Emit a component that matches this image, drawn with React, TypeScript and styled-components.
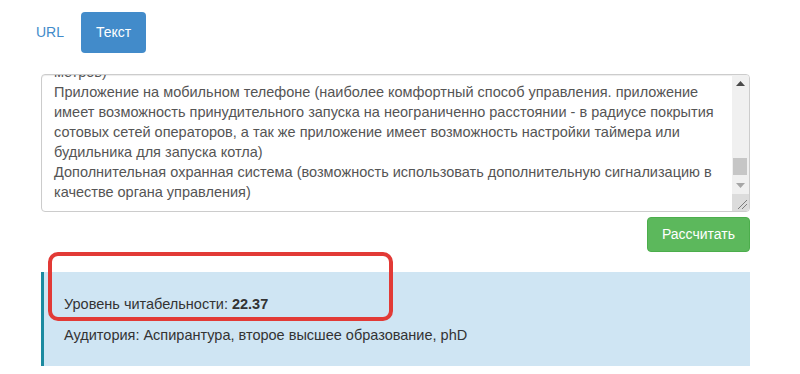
import { useEffect, useRef } from "react";
import styled, { createGlobalStyle } from "styled-components";

const GlobalStyle = createGlobalStyle`
  html, body {
    margin: 0;
    padding: 0;
    background: #fff;
  }
  body {
    font-family: "Liberation Sans", Arial, sans-serif;
    color: #333;
  }
`;

const lines = [
  "Котел твердотопливный с автоматическим управлением.",
  "Основные характеристики:",
  "Мощность котла - 25 кВт",
  "Площадь отапливаемого помещения - до 250 кв. метров",
  "Объем бункера для топлива - 150 литров",
  "Время работы на одной загрузке - до 5 суток",
  "Коэффициент полезного действия - 91%",
  "Вид топлива - пеллеты, уголь, дрова",
  "Рабочее давление теплоносителя - до 2,5 бар",
  "Максимальная температура теплоносителя - 90 градусов",
  "Габаритные размеры - 1200 х 650 х 1450 мм",
  "Вес котла - 320 кг",
  "Гарантия производителя - 5 лет",
  "Комплектация:",
  "Котел в сборе",
  "Горелка с автоматическим розжигом",
  "Шнековый податчик топлива",
  "Блок управления с жидкокристаллическим дисплеем",
  "Датчик температуры в помещении",
  "Инструкция по эксплуатации",
  "Способы управления котлом:",
  "Блок управления на корпусе котла (ручная настройка режимов работы)",
  "Комнатный термостат (поддержание заданной температуры в помещении)",
  "Пульт дистанционного управления (дальность действия пульта до 100",
  "метров)",
  "Приложение на мобильном телефоне (наиболее комфортный способ управления. приложение",
  "имеет возможность принудительного запуска на неограниченно расстоянии - в радиусе покрытия",
  "сотовых сетей операторов, а так же приложение имеет возможность настройки таймера или",
  "будильника для запуска котла)",
  "Дополнительная охранная система (возможность использовать дополнительную сигнализацию в",
  "качестве органа управления)",
  "",
];

const text = lines.join("\n");

export default function App() {
  const areaRef = useRef<HTMLTextAreaElement>(null);

  useEffect(() => {
    if (areaRef.current) {
      areaRef.current.scrollTop = 20 * 25 - 1;
    }
  }, []);

  return (
    <Page>
      <GlobalStyle />
      <Pills>
        <Pill>URL</Pill>
        <Pill $active>Текст</Pill>
      </Pills>

      <Form>
        <AreaWrap>
          <TextArea ref={areaRef} defaultValue={text} spellCheck={false} />
          <ScrollBar>
            <ArrowButton>
              <svg width="9" height="5" viewBox="0 0 9 5">
                <path d="M0 5 L4.5 0 L9 5 Z" fill="#4a4a4a" />
              </svg>
            </ArrowButton>
            <Track>
              <Thumb />
            </Track>
            <ArrowButton>
              <svg width="9" height="5" viewBox="0 0 9 5">
                <path d="M0 0 L4.5 5 L9 0 Z" fill="#a6a6a6" />
              </svg>
            </ArrowButton>
            <Corner>
              <svg width="17" height="17" viewBox="0 0 17 17">
                <path d="M15 6 L6 15 M15 10 L10 15" stroke="#7d7d7d" strokeWidth="1" />
              </svg>
            </Corner>
          </ScrollBar>
        </AreaWrap>
        <Actions>
          <SubmitButton type="button">Рассчитать</SubmitButton>
        </Actions>
      </Form>

      <Callout>
        <ResultLine>
          Уровень читабельности: <strong>22.37</strong>
        </ResultLine>
        <ResultLine>Аудитория: Аспирантура, второе высшее образование, phD</ResultLine>
        <Highlight />
      </Callout>
    </Page>
  );
}

const Page = styled.div`
  padding: 12px 0 0 41px;
  width: 709px;
`;

const Pills = styled.ul`
  display: flex;
  gap: 2px;
  list-style: none;
  margin: 0 0 0 -20px;
  padding: 0;
`;

const Pill = styled.li<{ $active?: boolean }>`
  padding: 10px 15px;
  font-size: 14px;
  line-height: 21px;
  border-radius: 4px;
  color: ${(p) => (p.$active ? "#fff" : "#428bca")};
  background: ${(p) => (p.$active ? "#428bca" : "transparent")};
  cursor: pointer;
`;

const Form = styled.div`
  margin-top: 21px;
`;

const AreaWrap = styled.div`
  position: relative;
`;

const TextArea = styled.textarea`
  display: block;
  box-sizing: border-box;
  width: 709px;
  height: 138px;
  margin: 0;
  padding: 6px 29px 6px 12px;
  font-family: "Liberation Sans", Arial, sans-serif;
  font-size: 14.5px;
  line-height: 20px;
  color: #555;
  background: #fff;
  border: 1px solid #ccc;
  border-radius: 4px;
  box-shadow: inset 0 1px 1px rgba(0, 0, 0, 0.075);
  resize: none;
  overflow: hidden;
  outline: none;
  scrollbar-width: none;

  &::-webkit-scrollbar {
    display: none;
  }
`;

const ScrollBar = styled.div`
  position: absolute;
  top: 1px;
  right: 1px;
  bottom: 1px;
  width: 17px;
  display: flex;
  flex-direction: column;
  background: #f0f0f0;
  border-top-right-radius: 3px;
  border-bottom-right-radius: 3px;
  overflow: hidden;
`;

const ArrowButton = styled.div`
  height: 17px;
  flex: none;
  display: flex;
  align-items: center;
  justify-content: center;
`;

const Track = styled.div`
  flex: 1;
  position: relative;
`;

const Thumb = styled.div`
  position: absolute;
  left: 1px;
  right: 2px;
  bottom: 2px;
  height: 17px;
  background: #c6c6c6;
`;

const Corner = styled.div`
  height: 17px;
  flex: none;
  background: #dcdcdc;
  line-height: 0;
`;

const Actions = styled.div`
  display: flex;
  justify-content: flex-end;
  margin-top: 5px;
`;

const SubmitButton = styled.button`
  font-family: "Liberation Sans", Arial, sans-serif;
  font-size: 14px;
  line-height: 21px;
  padding: 6px 14px;
  color: #fff;
  background: #5cb85c;
  border: 1px solid #4cae4c;
  border-radius: 4px;
  cursor: pointer;
`;

const Callout = styled.div`
  position: relative;
  margin-top: 20px;
  padding: 22px 20px 21px 20px;
  background: #cfe5f3;
  border-left: 3px solid #1b8aa0;
`;

const ResultLine = styled.p`
  margin: 0;
  font-size: 14.5px;
  line-height: 20px;
  color: #333;

  & + & {
    margin-top: 11px;
  }

  strong {
    font-weight: bold;
  }
`;

const Highlight = styled.div`
  position: absolute;
  left: 4px;
  top: -20px;
  width: 345px;
  height: 69px;
  box-sizing: border-box;
  border: 4px solid #e23a36;
  border-radius: 10px;
  pointer-events: none;
`;
